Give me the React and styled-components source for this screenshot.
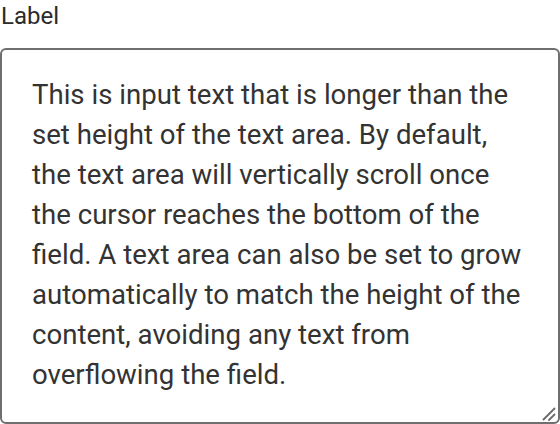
import React from "react";
import styled, { createGlobalStyle } from "styled-components";

const GlobalStyle = createGlobalStyle`
  html, body {
    margin: 0;
    padding: 0;
    background: #ffffff;
  }
  body {
    font-family: Roboto, "Noto Sans", "Liberation Sans", sans-serif;
  }
`;

const Field = styled.div`
  display: flex;
  flex-direction: column;
  gap: 16px;
  width: 560px;
  height: 424px;
`;

const Label = styled.label`
  font-family: Roboto, "Noto Sans", sans-serif;
  font-size: 24px;
  line-height: 32px;
  color: #2b2b2b;
  padding-left: 1px;
`;

const Box = styled.div`
  position: relative;
  flex: 1;
  display: flex;
`;

const TextArea = styled.textarea`
  box-sizing: border-box;
  flex: 1;
  width: 100%;
  margin: 0;
  padding: 25px 30px 27px 30px;
  border: 2px solid #6f6f6f;
  border-radius: 6px;
  font-family: Roboto, "Noto Sans", sans-serif;
  font-size: 27.6px;
  line-height: 40px;
  color: #333333;
  background: #ffffff;
  resize: none;
  overflow: hidden;
  outline: none;
`;

/* resize grip drawn over the lower right corner */
const Grip = styled.svg`
  position: absolute;
  right: 4px;
  bottom: 3px;
  width: 14px;
  height: 14px;
  pointer-events: none;
`;

const text =
  "This is input text that is longer than the set height of the text area. By default, the text area will vertically scroll once the cursor reaches the bottom of the field. A text area can also be set to grow automatically to match the height of the content, avoiding any text from overflowing the field.";

export default function App() {
  return (
    <>
      <GlobalStyle />
      <Field>
        <Label htmlFor="notes">Label</Label>
        <Box>
          <TextArea id="notes" defaultValue={text} />
          <Grip viewBox="0 0 14 14">
            <path
              d="M1.5 12.5 L12.5 1.5 M7 13 L12.5 7.5"
              stroke="#6a6a6a"
              strokeWidth="1.8"
              strokeLinecap="round"
              fill="none"
            />
          </Grip>
        </Box>
      </Field>
    </>
  );
}
